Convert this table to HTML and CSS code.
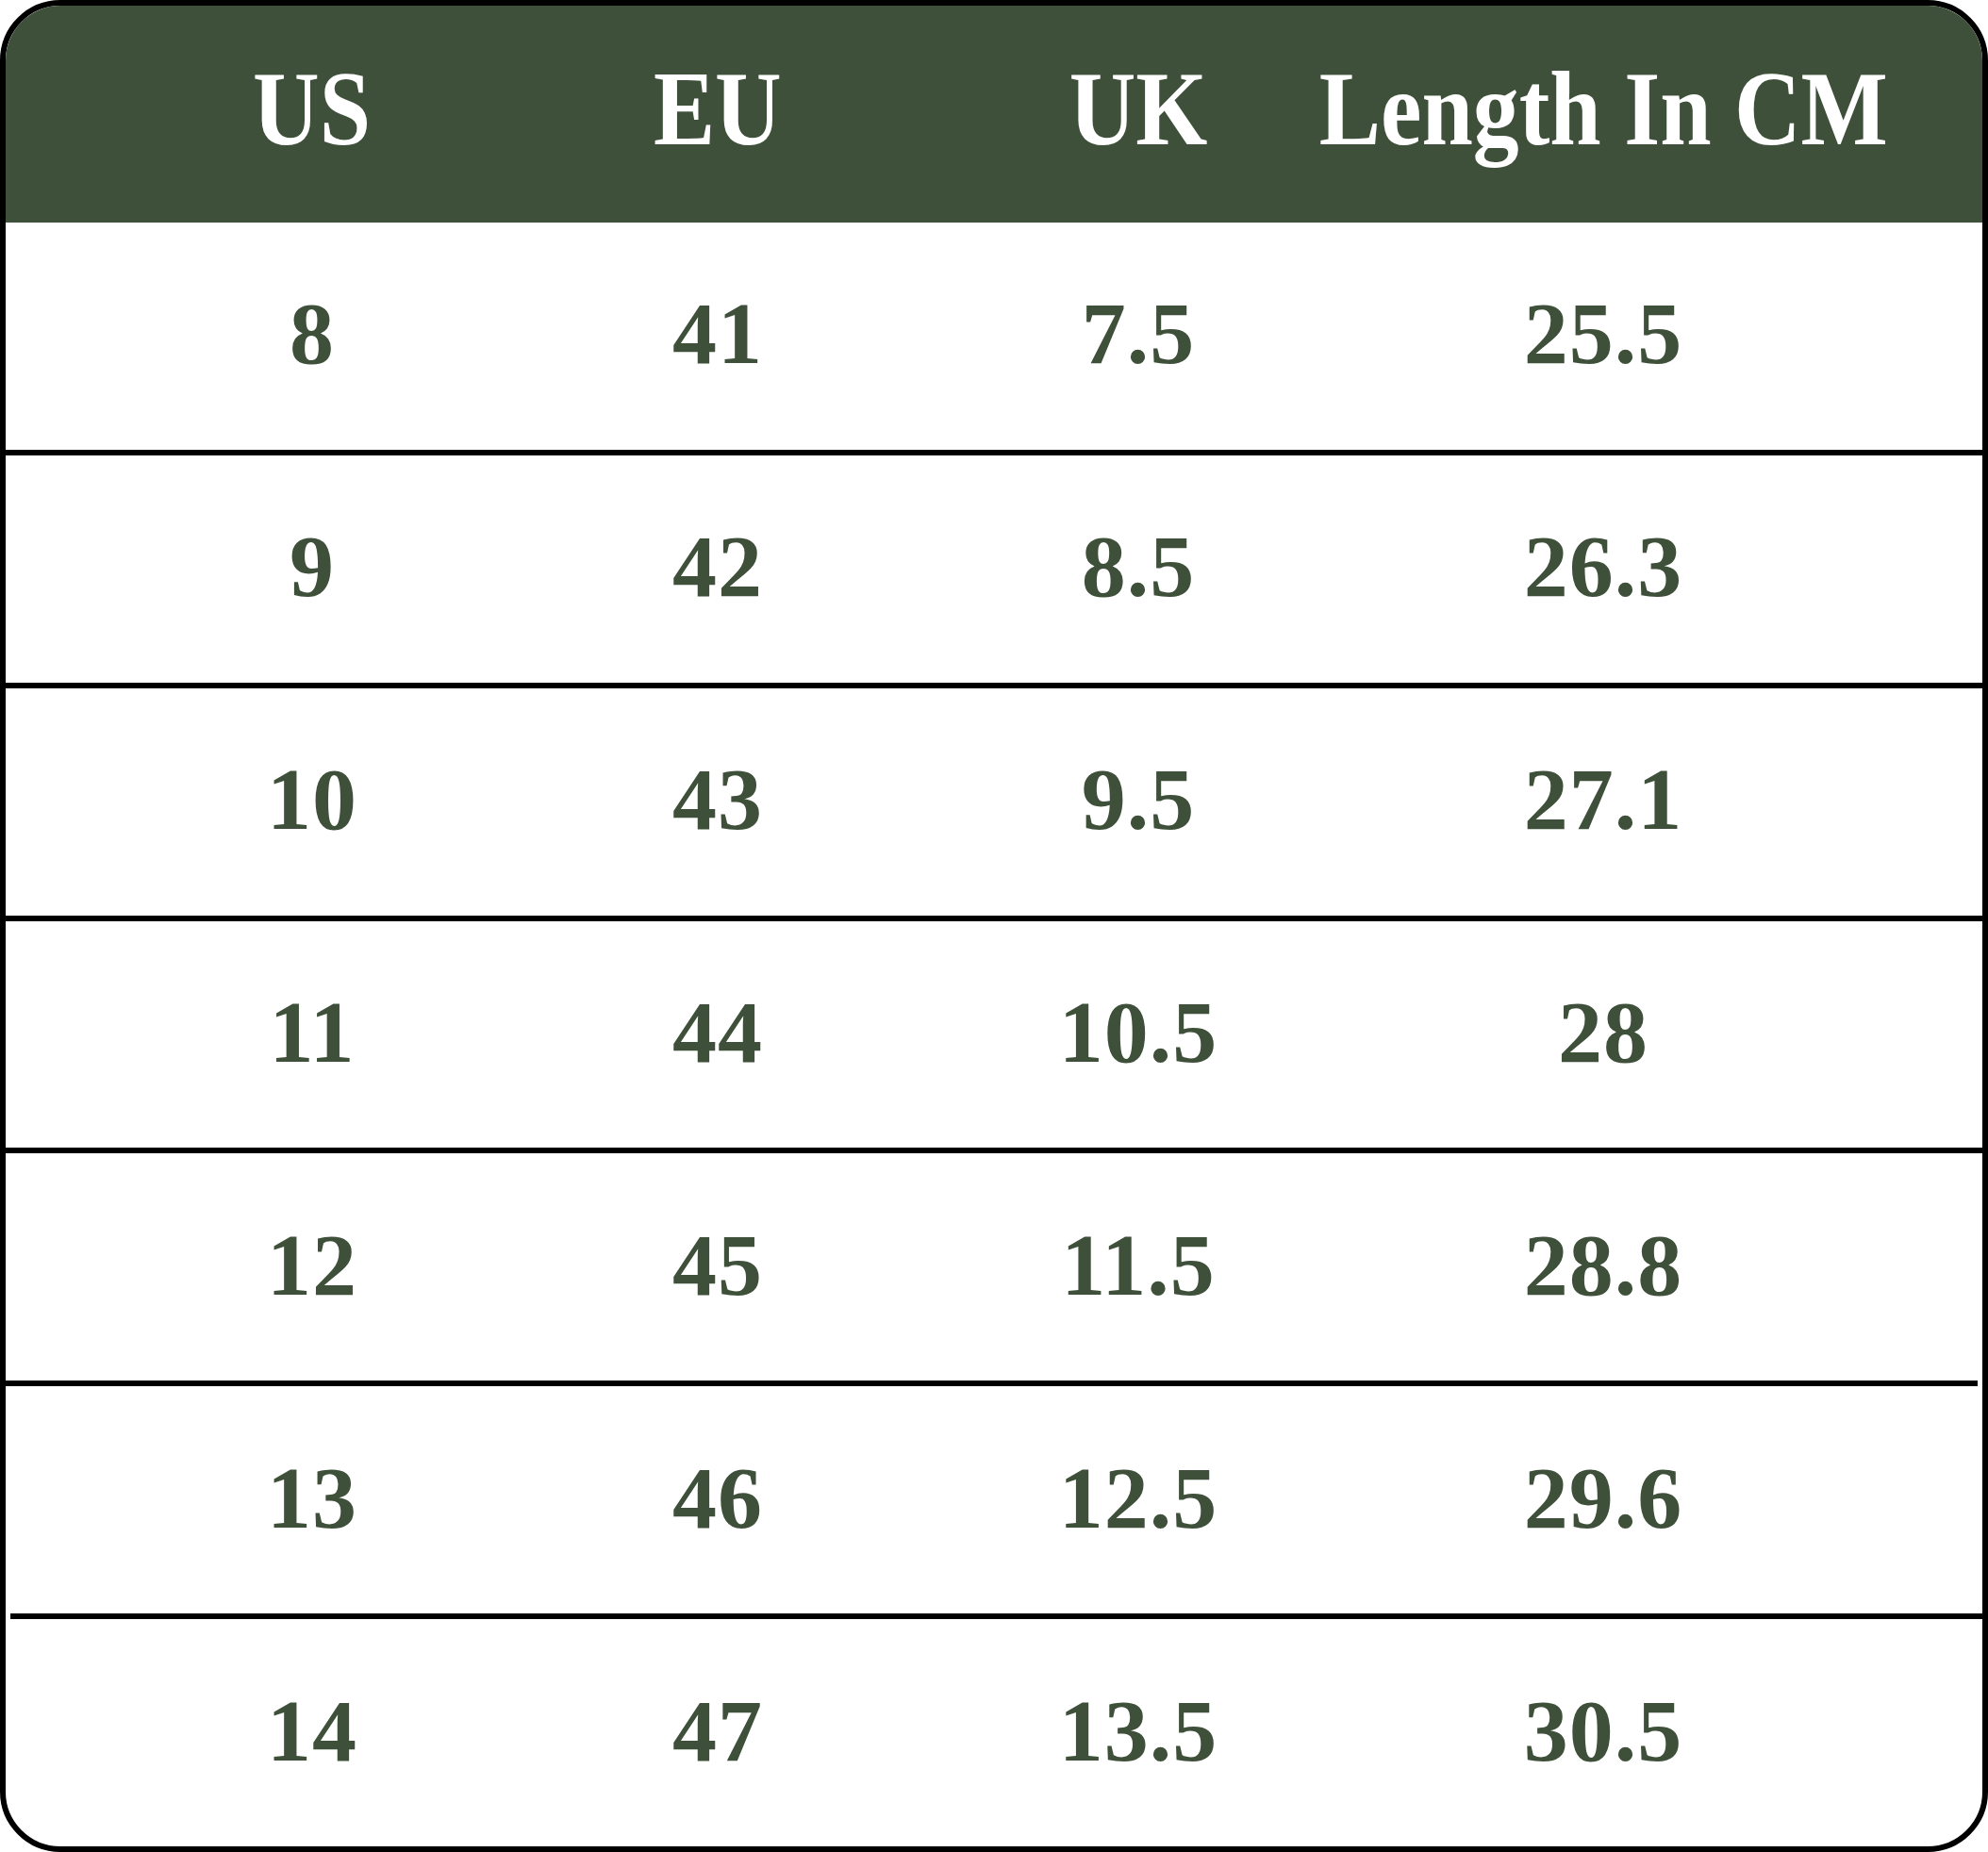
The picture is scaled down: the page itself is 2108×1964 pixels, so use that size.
FILE: index.html
```html
<!DOCTYPE html>
<html lang="en">
<head>
<meta charset="utf-8">
<title>Size Chart</title>
<link rel="stylesheet" href="styles.css">
</head>
<body>
<div class="chart">
  <div class="head grid">
    <div class="cell"><span class="h">US</span></div>
    <div class="cell"><span class="h">EU</span></div>
    <div class="cell"><span class="h">UK</span></div>
    <div class="cell"><span class="h">Length In CM</span></div>
  </div>
  <div class="row grid"><div class="cell">8</div><div class="cell">41</div><div class="cell">7.5</div><div class="cell">25.5</div></div>
  <div class="rule"></div>
  <div class="row grid"><div class="cell">9</div><div class="cell">42</div><div class="cell">8.5</div><div class="cell">26.3</div></div>
  <div class="rule"></div>
  <div class="row grid"><div class="cell">10</div><div class="cell">43</div><div class="cell">9.5</div><div class="cell">27.1</div></div>
  <div class="rule"></div>
  <div class="row grid"><div class="cell">11</div><div class="cell">44</div><div class="cell">10.5</div><div class="cell">28</div></div>
  <div class="rule"></div>
  <div class="row grid"><div class="cell">12</div><div class="cell">45</div><div class="cell">11.5</div><div class="cell">28.8</div></div>
  <div class="rule rule-short-right"></div>
  <div class="row grid"><div class="cell">13</div><div class="cell">46</div><div class="cell">12.5</div><div class="cell">29.6</div></div>
  <div class="rule rule-short-left"></div>
  <div class="row grid"><div class="cell">14</div><div class="cell">47</div><div class="cell">13.5</div><div class="cell">30.5</div></div>
</div>
</body>
</html>
```

FILE: styles.css
```css
html, body {
  margin: 0;
  padding: 0;
  background: #ffffff;
}

.chart {
  box-sizing: border-box;
  width: 2108px;
  height: 1964px;
  border: 6px solid #000000;
  border-radius: 64px;
  overflow: hidden;
  display: flex;
  flex-direction: column;
  font-family: "Liberation Serif", "Times New Roman", serif;
  font-weight: bold;
  background: #ffffff;
}

.grid {
  display: grid;
  grid-template-columns: 430px 430px 462px 524px;
  padding-left: 110px;
}

.cell {
  display: flex;
  justify-content: center;
  white-space: nowrap;
  letter-spacing: 1px;
}

.head {
  box-sizing: border-box;
  flex: none;
  height: 230px;
  background: #3e5039;
  color: #ffffff;
  font-size: 112px;
  align-items: center;
  padding-bottom: 12px;
}

.head .cell {
  letter-spacing: 0;
}

.h {
  display: inline-block;
  transform: scaleX(0.873);
}

.row {
  box-sizing: border-box;
  flex: 1;
  align-items: center;
  color: #3e5039;
  font-size: 94px;
  padding-bottom: 6px;
}

.rule {
  flex: none;
  height: 6px;
  background: #000000;
}

.rule-short-right {
  margin-right: 5px;
}

.rule-short-left {
  margin-left: 5px;
}
```
